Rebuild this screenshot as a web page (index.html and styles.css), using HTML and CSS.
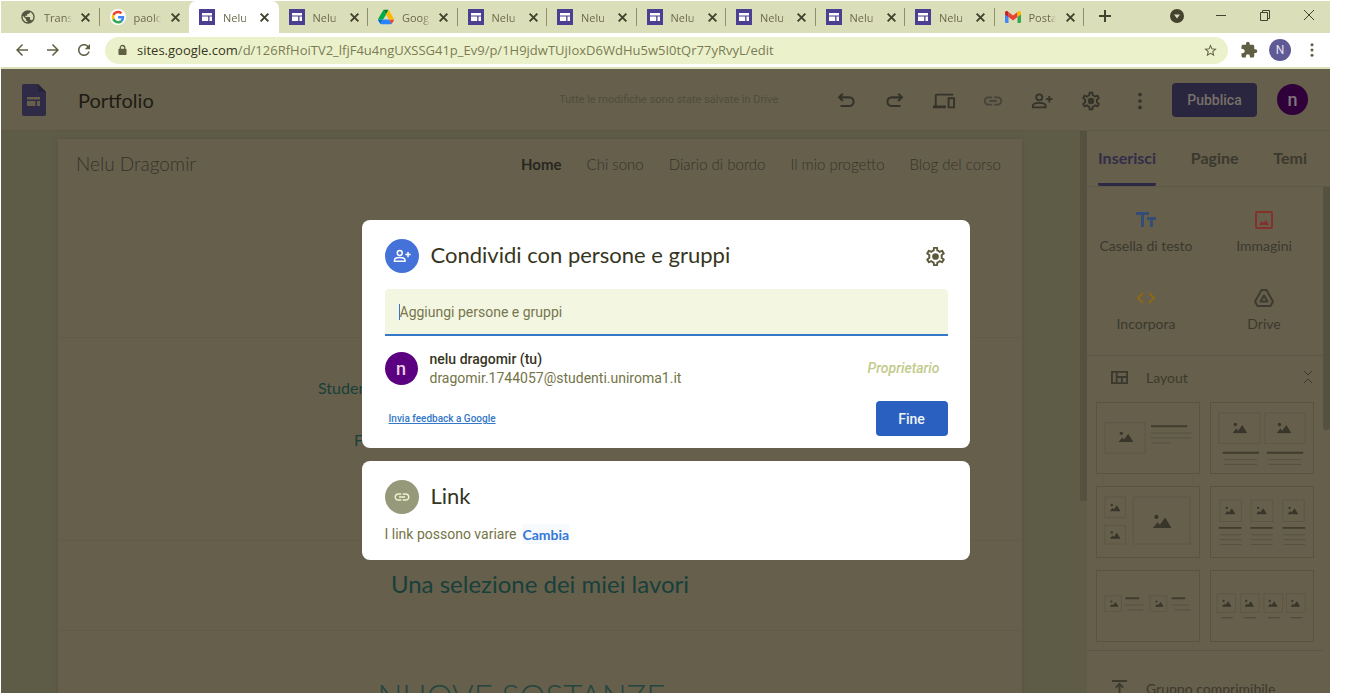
FILE: index.html
```html
<!DOCTYPE html>
<html lang="it">
  <head>
    <meta charset="UTF-8" />
    <meta name="viewport" content="width=device-width, initial-scale=1.0" />
    <title>Portfolio - Google Sites</title>
    <link rel="stylesheet" href="styles.css">
  </head>
  <body>
    <svg class="sprite" aria-hidden="true">
      <symbol id="sites" viewBox="0 0 16 16"><rect width="16" height="16" fill="#4a3f91"/><path d="M3 4h10v2.500H3zM3 7.500h6.200V12H3zM10.500 7.500H13V12h-2.500z" fill="#fff"/></symbol>
      <symbol id="globe" viewBox="0 0 24 24"><circle cx="12" cy="12" r="9" fill="#dbdfb9"/><path fill="#55563f" d="M12 2C6.480 2 2 6.480 2 12s4.480 10 10 10 10-4.480 10-10S17.520 2 12 2zm-1 17.930c-3.950-.490-7-3.850-7-7.930 0-.620.080-1.210.210-1.790L9 15v1c0 1.100.900 2 2 2v1.930zm6.900-2.540c-.260-.810-1-1.390-1.900-1.390h-1v-3c0-.550-.450-1-1-1H8v-2h2c.550 0 1-.450 1-1V7h2c1.100 0 2-.900 2-2v-.410c2.930 1.190 5 4.060 5 7.410 0 2.080-.800 3.970-2.100 5.390z"/></symbol>
      <symbol id="google" viewBox="0 0 48 48"><circle cx="24" cy="24" r="24" fill="#fff"/><g transform="translate(5 5) scale(.8)"><path fill="#ea4335" d="M24 9.500c3.540 0 6.710 1.220 9.210 3.600l6.850-6.850C35.900 2.380 30.470 0 24 0 14.620 0 6.510 5.380 2.560 13.220l7.980 6.190C12.430 13.720 17.740 9.500 24 9.500z"/><path fill="#4285f4" d="M46.980 24.550c0-1.570-.150-3.090-.380-4.550H24v9.020h12.940c-.580 2.960-2.260 5.480-4.780 7.180l7.730 6c4.510-4.180 7.090-10.360 7.090-17.650z"/><path fill="#fbbc05" d="M10.530 28.590c-.480-1.450-.760-2.990-.760-4.590s.270-3.140.760-4.590l-7.980-6.190C.920 16.460 0 20.120 0 24c0 3.880.920 7.540 2.560 10.780l7.970-6.190z"/><path fill="#34a853" d="M24 48c6.480 0 11.930-2.130 15.890-5.810l-7.730-6c-2.150 1.450-4.920 2.300-8.160 2.300-6.260 0-11.570-4.220-13.470-9.910l-7.980 6.190C6.510 42.620 14.620 48 24 48z"/></g></symbol>
      <symbol id="gdrive" viewBox="0 0 87 78"><path fill="#0066da" d="M6.600 66.850l3.850 6.650c.800 1.400 1.950 2.500 3.300 3.300L27.500 53H0c0 1.550.400 3.100 1.200 4.500z"/><path fill="#00ac47" d="M43.650 25L29.900 1.200c-1.350.800-2.500 1.900-3.300 3.300L1.200 48.500C.400 49.900 0 51.450 0 53h27.500z"/><path fill="#ea4335" d="M73.550 76.800c1.350-.800 2.500-1.900 3.300-3.300l9.250-16c.800-1.400 1.200-2.950 1.200-4.500H59.800l5.850 11.500z"/><path fill="#00832d" d="M43.650 25L57.400 1.200C56.050.4 54.500 0 52.900 0H34.400c-1.600 0-3.150.450-4.500 1.200z"/><path fill="#2684fc" d="M59.800 53H27.500L13.750 76.800c1.350.800 2.900 1.200 4.500 1.200h50.800c1.600 0 3.150-.450 4.500-1.200z"/><path fill="#ffba00" d="M73.400 26.500L60.700 4.500c-.800-1.400-1.950-2.500-3.300-3.300L43.650 25 59.800 53h27.450c0-1.550-.400-3.100-1.200-4.500z"/></symbol>
      <symbol id="gmail" viewBox="0 0 16 12"><path fill="#4285f4" d="M0 2l3.500 2.500V12H1a1 1 0 0 1-1-1z"/><path fill="#34a853" d="M16 2l-3.500 2.500V12H15a1 1 0 0 0 1-1z"/><path fill="#ea4335" d="M3.500 1L8 4.500 12.500 1v5L8 9.500 3.500 6z"/><path fill="#c5221f" d="M0 1.800C0 .2 1.600-.4 2.800.5l.7.5v5L0 3.500z"/><path fill="#fbbc04" d="M16 1.800C16 .2 14.400-.4 13.200.5l-.7.500v5L16 3.500z"/></symbol>
      <symbol id="close" viewBox="0 0 10 10"><path d="M1.500 1.500l7 7M8.500 1.500l-7 7" stroke="currentColor" stroke-width="1.800" fill="none"/></symbol>
      <symbol id="back" viewBox="0 0 24 24"><path fill="currentColor" d="M20 11H7.830l5.590-5.590L12 4l-8 8 8 8 1.410-1.410L7.830 13H20v-2z"/></symbol>
      <symbol id="reload" viewBox="0 0 24 24"><path fill="currentColor" d="M17.650 6.350C16.200 4.900 14.210 4 12 4c-4.420 0-7.990 3.580-7.990 8s3.570 8 7.990 8c3.730 0 6.840-2.550 7.730-6h-2.080c-.820 2.330-3.040 4-5.650 4-3.310 0-6-2.690-6-6s2.690-6 6-6c1.660 0 3.140.690 4.220 1.780L13 11h7V4l-2.350 2.350z"/></symbol>
      <symbol id="dots" viewBox="0 0 24 24"><g fill="currentColor"><circle cx="12" cy="5" r="2"/><circle cx="12" cy="12" r="2"/><circle cx="12" cy="19" r="2"/></g></symbol>
      <symbol id="undo" viewBox="0 0 24 24"><path d="M8.500 4L4.500 8l4 4M4.500 8h11a4.500 4.500 0 0 1 0 9.500H6" fill="none" stroke="currentColor" stroke-width="2.300"/></symbol>
      <symbol id="devices" viewBox="0 0 24 24"><path fill="currentColor" d="M4 6h18V4H4c-1.100 0-2 .900-2 2v11H0v3h14v-3H4V6zm19 2h-6c-.550 0-1 .450-1 1v10c0 .550.450 1 1 1h6c.550 0 1-.450 1-1V9c0-.550-.450-1-1-1zm-1 10h-4v-8h4v8z"/></symbol>
      <symbol id="link" viewBox="0 0 24 24"><path fill="currentColor" d="M3.900 12c0-1.710 1.390-3.100 3.100-3.100h4V7H7c-2.760 0-5 2.240-5 5s2.240 5 5 5h4v-1.900H7c-1.710 0-3.100-1.390-3.100-3.100zM8 13h8v-2H8v2zm9-6h-4v1.900h4c1.710 0 3.100 1.390 3.100 3.100s-1.390 3.100-3.100 3.100h-4V17h4c2.760 0 5-2.240 5-5s-2.240-5-5-5z"/></symbol>
      <symbol id="person" viewBox="0 0 24 24"><g fill="none" stroke="currentColor" stroke-width="2"><circle cx="9" cy="8" r="3.300"/><path d="M2 19v-1.500C2 15 6 14 9 14s7 1 7 3.500V19zM20 6.500v7M16.500 10h7"/></g></symbol>
      <symbol id="gear" viewBox="0 0 24 24"><path fill="currentColor" d="M19.430 12.980c.040-.320.070-.640.070-.980 0-.340-.030-.660-.070-.980l2.110-1.650c.190-.150.240-.420.120-.640l-2-3.460c-.090-.160-.260-.250-.440-.250-.060 0-.120.010-.170.030l-2.490 1c-.520-.400-1.080-.730-1.690-.980l-.380-2.650C14.460 2.180 14.250 2 14 2h-4c-.250 0-.460.180-.490.420l-.380 2.650c-.610.250-1.170.590-1.690.980l-2.490-1c-.060-.020-.120-.030-.180-.030-.170 0-.340.090-.430.250l-2 3.460c-.130.220-.070.490.120.640l2.110 1.650c-.040.320-.070.650-.070.980 0 .330.030.660.070.980l-2.110 1.650c-.190.150-.240.420-.120.640l2 3.460c.090.160.260.250.440.250.060 0 .120-.010.170-.030l2.490-1c.520.400 1.080.730 1.690.980l.380 2.650c.030.240.240.420.490.420h4c.250 0 .460-.180.490-.420l.380-2.650c.610-.250 1.170-.590 1.690-.980l2.490 1c.060.020.120.030.180.030.170 0 .340-.090.430-.250l2-3.460c.120-.220.070-.490-.120-.640l-2.110-1.650zm-1.980-1.710c.040.310.050.520.050.730 0 .210-.020.430-.050.730l-.140 1.130.890.700 1.080.840-.700 1.210-1.270-.510-1.040-.420-.900.680c-.430.320-.840.560-1.250.730l-1.060.430-.160 1.130-.200 1.350h-1.400l-.190-1.350-.160-1.130-1.060-.430c-.430-.180-.830-.410-1.230-.710l-.910-.700-1.060.430-1.270.510-.700-1.210 1.080-.840.890-.700-.140-1.130c-.030-.310-.050-.540-.050-.740s.020-.430.050-.730l.140-1.130-.890-.700-1.080-.840.700-1.210 1.270.510 1.040.420.900-.680c.430-.320.840-.560 1.250-.730l1.060-.430.160-1.130.200-1.350h1.390l.190 1.350.160 1.130 1.060.430c.430.180.830.410 1.230.710l.910.700 1.060-.430 1.270-.510.700 1.210-1.070.850-.890.700.140 1.130z"/><circle cx="12" cy="12" r="3.500" fill="currentColor"/></symbol>
      <symbol id="peaks" viewBox="0 0 16 12"><path fill="#38352a" d="M0 12l4-5 2 2.300L10.500 3 16 12z"/><circle cx="3" cy="2.500" r="1.800" fill="#38352a"/></symbol>
    </svg>

    <div class="browser">
      <div class="tabstrip">
        <div class="tabs">
          <div class="tab"><svg><use href="#globe"/></svg><span>Translate</span><button aria-label="Chiudi"><svg><use href="#close"/></svg></button></div>
          <div class="tab no-line"><svg><use href="#google"/></svg><span>paolo rossi</span><button aria-label="Chiudi"><svg><use href="#close"/></svg></button></div>
          <div class="tab active"><svg><use href="#sites"/></svg><span>Nelu Dragomir</span><button aria-label="Chiudi"><svg><use href="#close"/></svg></button></div>
          <div class="tab"><svg><use href="#sites"/></svg><span>Nelu Dragomir</span><button aria-label="Chiudi"><svg><use href="#close"/></svg></button></div>
          <div class="tab"><svg><use href="#gdrive"/></svg><span>Google Drive</span><button aria-label="Chiudi"><svg><use href="#close"/></svg></button></div>
          <div class="tab"><svg><use href="#sites"/></svg><span>Nelu Dragomir</span><button aria-label="Chiudi"><svg><use href="#close"/></svg></button></div>
          <div class="tab"><svg><use href="#sites"/></svg><span>Nelu Dragomir</span><button aria-label="Chiudi"><svg><use href="#close"/></svg></button></div>
          <div class="tab"><svg><use href="#sites"/></svg><span>Nelu Dragomir</span><button aria-label="Chiudi"><svg><use href="#close"/></svg></button></div>
          <div class="tab"><svg><use href="#sites"/></svg><span>Nelu Dragomir</span><button aria-label="Chiudi"><svg><use href="#close"/></svg></button></div>
          <div class="tab"><svg><use href="#sites"/></svg><span>Nelu Dragomir</span><button aria-label="Chiudi"><svg><use href="#close"/></svg></button></div>
          <div class="tab"><svg><use href="#sites"/></svg><span>Nelu Dragomir</span><button aria-label="Chiudi"><svg><use href="#close"/></svg></button></div>
          <div class="tab"><svg><use href="#gmail"/></svg><span>Posta in arrivo</span><button aria-label="Chiudi"><svg><use href="#close"/></svg></button></div>
        </div>
        <div class="window-buttons">
          <button class="new-tab" aria-label="Nuova scheda"><svg viewBox="0 0 14 14"><path d="M7 1v12M1 7h12" stroke="currentColor" stroke-width="2"/></svg></button>
          <button aria-label="Cerca schede"><svg viewBox="0 0 14 14"><circle cx="7" cy="7" r="7" fill="currentColor"/><path d="M4 5.500h6L7 9.500z" fill="#dbdfb9"/></svg></button>
          <button aria-label="Riduci"><svg viewBox="0 0 14 14"><path d="M2 6.500h10" stroke="currentColor"/></svg></button>
          <button aria-label="Ripristina"><svg viewBox="0 0 14 14"><path d="M2.500 3.500h7v8h-7zM4.500 3.500v-2h7v8h-2" fill="none" stroke="currentColor"/></svg></button>
          <button aria-label="Chiudi finestra"><svg viewBox="0 0 14 14"><path d="M2 1l10 10M12 1L2 11" stroke="currentColor"/></svg></button>
        </div>
      </div>

      <div class="toolbar">
        <button class="nav" aria-label="Indietro"><svg><use href="#back"/></svg></button>
        <button class="nav forward" aria-label="Avanti"><svg><use href="#back"/></svg></button>
        <button class="nav" aria-label="Ricarica"><svg><use href="#reload"/></svg></button>
        <div class="address">
          <svg class="lock" viewBox="0 0 10 12"><path d="M2.500 5V3.500a2.500 2.500 0 0 1 5 0V5" fill="none" stroke="currentColor" stroke-width="1.400"/><rect x=".5" y="4.500" width="9" height="7" rx="1" fill="currentColor"/></svg>
          <p><b>sites.google.com</b>/d/126RfHoiTV2_lfjF4u4ngUXSSG41p_Ev9/p/1H9jdwTUjIoxD6WdHu5w5I0tQr77yRvyL/edit</p>
          <button aria-label="Preferiti"><svg viewBox="0 0 24 24"><path fill="currentColor" d="M22 9.240l-7.190-.620L12 2 9.190 8.630 2 9.240l5.460 4.730L5.820 21 12 17.270 18.180 21l-1.630-7.030L22 9.240zM12 15.400l-3.760 2.270 1-4.280-3.320-2.880 4.380-.380L12 6.100l1.710 4.040 4.380.380-3.320 2.880 1 4.280L12 15.400z"/></svg></button>
        </div>
        <button aria-label="Estensioni"><svg viewBox="0 0 24 24"><path fill="currentColor" d="M20.500 11H19V7c0-1.100-.900-2-2-2h-4V3.500C13 2.120 11.880 1 10.500 1S8 2.120 8 3.500V5H4c-1.100 0-1.990.900-1.990 2v3.800H3.500c1.490 0 2.700 1.210 2.700 2.700s-1.210 2.700-2.700 2.700H2V20c0 1.100.900 2 2 2h3.800v-1.500c0-1.490 1.210-2.700 2.700-2.700 1.490 0 2.700 1.210 2.700 2.700V22H17c1.100 0 2-.900 2-2v-4h1.500c1.380 0 2.500-1.120 2.500-2.500S21.880 11 20.500 11z"/></svg></button>
        <button class="profile">N</button>
        <button aria-label="Menu"><svg><use href="#dots"/></svg></button>
      </div>

      <div class="app">
        <header class="app-header">
          <svg class="logo" viewBox="0 0 24 32"><path fill="#2f2b46" d="M2 0h14l8 8v22a2 2 0 0 1-2 2H2a2 2 0 0 1-2-2V2a2 2 0 0 1 2-2z"/><path fill="#26223a" d="M16 0l8 8h-8z"/><path fill="#665f4c" d="M5 13h13v2.500H5zM5 17h8.500v5H5zM15 17h3v5h-3z"/></svg>
          <h1>Portfolio</h1>
          <small>Tutte le modifiche sono state salvate in Drive</small>
          <div class="actions">
            <button aria-label="Annulla"><svg><use href="#undo"/></svg></button>
            <button class="redo" aria-label="Ripeti"><svg><use href="#undo"/></svg></button>
            <button aria-label="Anteprima"><svg><use href="#devices"/></svg></button>
            <button class="dim" aria-label="Copia link"><svg><use href="#link"/></svg></button>
            <button aria-label="Condividi"><svg><use href="#person"/></svg></button>
            <button aria-label="Impostazioni"><svg><use href="#gear"/></svg></button>
            <button aria-label="Altro"><svg><use href="#dots"/></svg></button>
          </div>
          <button class="publish">Pubblica</button>
          <button class="avatar dark">n</button>
        </header>

        <div class="editor">
          <main class="canvas">
            <div class="site">
              <section class="site-top">
                <h2>Nelu Dragomir</h2>
                <nav>
                  <a class="current" href="#">Home</a>
                  <a href="#">Chi sono</a>
                  <a href="#">Diario di bordo</a>
                  <a href="#">Il mio progetto</a>
                  <a href="#">Blog del corso</a>
                </nav>
              </section>
              <section class="bio">
                <p>Studente</p>
                <p class="second">F</p>
              </section>
              <section class="works"><h3>Una selezione dei miei lavori</h3></section>
              <section class="project"><h3>NUOVE SOSTANZE</h3></section>
            </div>
          </main>
          <div class="canvas-scroll"></div>

          <aside class="sidebar">
            <div class="side-tabs">
              <button class="selected">Inserisci</button>
              <button>Pagine</button>
              <button>Temi</button>
            </div>
            <div class="side-body">
              <div class="side-content">
                <div class="inserts">
                  <button><svg viewBox="0 0 20 20"><path fill="#344d74" d="M0 2h13v3H8v12H5V5H0zM11 7h9v3h-3v7h-3v-7h-3z"/></svg>Casella di testo</button>
                  <button><svg viewBox="0 0 20 20"><rect x="2" y="2" width="16" height="16" rx="1" fill="none" stroke="#84302d" stroke-width="2"/><path fill="#84302d" d="M5 15l2.500-4 2 2 2.500-3 3 5z"/></svg>Immagini</button>
                  <button><svg viewBox="0 0 20 20"><path d="M7 5l-5 5 5 5M13 5l5 5-5 5" fill="none" stroke="#8c6a15" stroke-width="2"/></svg>Incorpora</button>
                  <button><svg viewBox="0 0 20 20"><g fill="none" stroke="#3e3c30" stroke-width="2" stroke-linejoin="round"><path d="M7.500 2h5L19 13.500 16.500 18h-13L1 13.500z"/><path d="M10 7.500l3.500 6h-7z"/></g></svg>Drive</button>
                </div>
                <div class="group">
                  <svg viewBox="0 0 18 14"><path d="M1 1h16v12H1zM6 1v12M6 6.500h11M11.500 6.500V13" fill="none" stroke="currentColor" stroke-width="2"/></svg>
                  <span>Layout</span>
                  <svg class="fold" viewBox="0 0 10 14"><path d="M1 1l4 4 4-4M1 13l4-4 4 4" fill="none" stroke="currentColor"/></svg>
                </div>
                <div class="layouts">
                  <svg viewBox="0 0 104 71"><rect class="box" x="8" y="20" width="41" height="31"/><use href="#peaks" x="22" y="28" width="15" height="12"/><path class="head" d="M55 23.500h37"/><path class="line" d="M55 30.500h41M55 35.500h41M55 40.500h20"/></svg>
                  <svg viewBox="0 0 104 71"><rect class="box" x="8" y="10" width="42" height="31"/><rect class="box" x="55" y="10" width="41" height="31"/><use href="#peaks" x="22" y="19" width="15" height="12"/><use href="#peaks" x="67" y="19" width="15" height="12"/><path class="head" d="M12 50.500h37M57 50.500h37"/><path class="line" d="M14 57.500h33M14 62.500h33M59 57.500h33M59 62.500h33"/></svg>
                  <svg viewBox="0 0 104 71"><rect class="box" x="8" y="10" width="21" height="21"/><rect class="box" x="8" y="39" width="21" height="19"/><rect class="box" x="37" y="10" width="58" height="48"/><use href="#peaks" x="13" y="16" width="11" height="9"/><use href="#peaks" x="13" y="44" width="11" height="9"/><use href="#peaks" x="57" y="27" width="19" height="15"/></svg>
                  <svg viewBox="0 0 104 71"><rect class="box" x="9" y="13" width="22" height="22"/><rect class="box" x="41" y="13" width="22" height="22"/><rect class="box" x="73" y="13" width="22" height="22"/><use href="#peaks" x="14" y="19" width="11" height="9"/><use href="#peaks" x="46" y="19" width="11" height="9"/><use href="#peaks" x="78" y="19" width="11" height="9"/><path class="head" d="M8 41.500h23M40 41.500h23M73 41.500h23"/><path class="line" d="M9 48.500h22M9 53.500h22M9 58.500h22M41 48.500h22M41 53.500h22M41 58.500h22M74 48.500h22M74 53.500h22M74 58.500h22"/></svg>
                  <svg viewBox="0 0 104 71"><rect class="box" x="8" y="25" width="17" height="16"/><rect class="box" x="54" y="25" width="17" height="16"/><use href="#peaks" x="13" y="29" width="9" height="8"/><use href="#peaks" x="59" y="29" width="9" height="8"/><path class="head" d="M29 27.500h14M76 27.500h14"/><path class="line" d="M29 34.500h18M31 39.500h16M76 34.500h18M79 39.500h16"/></svg>
                  <svg viewBox="0 0 104 71"><rect class="box" x="6" y="23" width="19" height="19"/><rect class="box" x="30" y="23" width="19" height="19"/><rect class="box" x="54" y="23" width="19" height="19"/><rect class="box" x="77" y="23" width="19" height="19"/><use href="#peaks" x="11" y="28" width="10" height="9"/><use href="#peaks" x="34" y="28" width="10" height="9"/><use href="#peaks" x="58" y="28" width="10" height="9"/><use href="#peaks" x="81" y="28" width="10" height="9"/><path class="line strong" d="M10 47.500h12M34 47.500h12M58 47.500h12M81 47.500h12"/></svg>
                </div>
                <div class="group last">
                  <svg viewBox="0 0 18 18"><path d="M1 1h16M9 4v13M5 8l4-4 4 4" fill="none" stroke="currentColor" stroke-width="2"/></svg>
                  <span>Gruppo comprimibile</span>
                </div>
              </div>
              <div class="side-scroll"></div>
            </div>
          </aside>
        </div>

        <div class="overlay">
          <form class="dialog share">
            <div class="dialog-title">
              <span class="round blue"><svg><use href="#person"/></svg></span>
              <h2>Condividi con persone e gruppi</h2>
              <button type="button" aria-label="Impostazioni"><svg><use href="#gear"/></svg></button>
            </div>
            <div class="field"><input type="text" aria-label="Aggiungi persone e gruppi" placeholder="Aggiungi persone e gruppi"></div>
            <div class="member">
              <span class="avatar">n</span>
              <div>
                <b>nelu dragomir (tu)</b>
                <p>dragomir.1744057@studenti.uniroma1.it</p>
              </div>
              <em>Proprietario</em>
            </div>
            <div class="dialog-foot">
              <a href="#">Invia feedback a Google</a>
              <button type="button" class="done">Fine</button>
            </div>
          </form>
          <div class="dialog links">
            <div class="dialog-title">
              <span class="round"><svg><use href="#link"/></svg></span>
              <h2>Link</h2>
            </div>
            <p>I link possono variare <button type="button">Cambia</button></p>
          </div>
        </div>
      </div>
    </div>
  </body>
</html>
```

FILE: styles.css
```css
* { box-sizing: border-box; }
html, body { height: 100%; margin: 0; overflow: hidden; background-color: #fff; }
body { padding: 1px 15px 0 1px; font-family: Roboto, "Liberation Sans", sans-serif; font-size: 14px; }
h1, h2, h3, p { margin: 0; font-weight: 400; }
button { display: flex; align-items: center; justify-content: center; padding: 0; border: 0; background: none; color: inherit; font: inherit; }
svg { flex: none; }
.sprite { position: absolute; width: 0; height: 0; }
.browser { display: flex; flex-direction: column; height: 100%; }

/* tabs */
.tabstrip { display: flex; flex: none; height: 32px; background-color: #dbdfb9; color: #44432f; }
.tabs { display: flex; flex: 1; min-width: 0; padding-left: 9px; }
.tab { display: flex; flex: 1; align-items: center; gap: 8px; min-width: 0; padding: 0 8px 0 10px; background: linear-gradient(#8d8f6f, #8d8f6f) no-repeat right center / 1px 18px; font-family: "Open Sans", "Noto Sans", sans-serif; font-size: 11px; }
.tab > svg { width: 16px; height: 16px; }
.tab span { flex: 1; overflow: hidden; color: #6b694c; white-space: nowrap; -webkit-mask-image: linear-gradient(to right, #000 75%, transparent); mask-image: linear-gradient(to right, #000 75%, transparent); }
.tab button { width: 12px; height: 16px; }
.tab button svg { width: 11px; height: 11px; }
.tab.no-line { background: none; }
.tab.active { border-radius: 7px 7px 0 0; background: #fff; }
.window-buttons { display: flex; flex: none; align-items: center; gap: 30px; width: 246px; padding: 0 14px 2px; }
.window-buttons svg { width: 14px; height: 14px; }
.new-tab { margin-right: auto; }

/* address bar */
.toolbar { display: flex; flex: none; align-items: center; gap: 12px; height: 36px; padding: 0 10px 0 11px; border-bottom: 2px solid #dbe0bb; color: #605f43; }
.toolbar button { width: 17px; height: 24px; }
.toolbar .nav { width: 19px; }
.toolbar svg { width: 18px; height: 18px; }
.forward svg, .redo svg { transform: scaleX(-1); }
.address { display: flex; flex: 1; align-items: center; gap: 10px; height: 27px; min-width: 0; padding: 0 9px 0 13px; border-radius: 14px; background-color: #ebf2cb; font-family: "Open Sans", "Noto Sans", sans-serif; font-size: 13px; }
.address p { flex: 1; overflow: hidden; color: #7b7a55; white-space: nowrap; }
.address b { color: #36351f; font-weight: 400; }
.address .lock { width: 9px; height: 12px; }
.address button svg { width: 15px; height: 15px; }
.toolbar .profile { width: 22px; height: 22px; border-radius: 50%; background-color: #5f5996; color: #e4e1e8; font-size: 12px; }

/* app header */
.app { position: relative; display: flex; flex: 1; flex-direction: column; min-height: 0; background-color: #665f4c; color: #34332a; }
.app-header { display: flex; flex: none; align-items: center; height: 62px; padding: 0 22px 0 21px; border-bottom: 1px solid #5b5844; }
.logo { width: 24px; height: 32px; margin-right: 32px; }
.app-header h1 { flex: 1; color: #1d1c14; font-family: Lato, sans-serif; font-size: 20px; line-height: 24px; }
.app-header small { margin-right: 56px; color: #504c3b; font-size: 11px; }
.actions { display: flex; gap: 25px; padding-top: 2px; }
.actions button { width: 24px; height: 24px; }
.actions svg { width: 22px; height: 22px; }
.actions .dim { color: #46433a; }
.publish { width: 85px; height: 34px; margin: 0 20px; border-radius: 4px; background-color: #2a2640; color: #777168; font-size: 14px; font-weight: 500; }
.avatar { display: flex; flex: none; align-items: center; justify-content: center; width: 33px; height: 33px; border-radius: 50%; background-color: #5b0080; color: #e9cfe3; font-size: 18px; font-weight: 500; line-height: 20px; }
.avatar.dark { width: 31px; height: 31px; background-color: #30003b; color: #81767b; }

/* site canvas */
.editor { display: flex; flex: 1; min-height: 0; overflow: hidden; background-color: #5e5b47; }
.canvas { flex: 1; min-width: 0; padding: 8px 58px 0 57px; }
.site { background-color: #665f4c; box-shadow: 0 0 3px #534f3d; font-family: Lato, sans-serif; }
.site section { border-bottom: 1px solid #625b48; }
.site-top { display: flex; align-items: flex-start; justify-content: space-between; height: 199px; padding: 12px 21px 0 18px; }
.site-top h2 { font-size: 19px; font-weight: 300; line-height: 26px; }
.site nav { display: flex; gap: 25px; font-size: 15px; font-weight: 300; line-height: 26px; }
.site nav a { color: #34332a; text-decoration: none; }
.site nav .current { color: #27271f; font-weight: 700; }
.bio { height: 203px; padding: 38px 0 0 260px; color: #183f3a; font-size: 16px; line-height: 24px; }
.bio .second { padding: 28px 0 0 36px; }
.works { display: flex; align-items: center; justify-content: center; height: 90px; padding-bottom: 5px; color: #183f3a; }
.works h3 { font-size: 24px; }
.project { height: 130px; padding: 45px 37px 0 0; color: #234640; text-align: center; }
.project h3 { font-size: 33px; font-weight: 300; line-height: 40px; }
.canvas-scroll { flex: none; width: 7px; height: 370px; background-color: #545140; }

/* sidebar */
.sidebar { display: flex; flex: none; flex-direction: column; width: 243px; background-color: #665f4c; color: #3b392e; }
.side-tabs { display: flex; flex: none; justify-content: space-between; height: 56px; padding: 0 23px 0 11px; border-bottom: 1px solid #5d5945; }
.side-tabs button { border-bottom: 3px solid transparent; font-family: Lato, sans-serif; font-size: 16px; font-weight: 700; }
.side-tabs .selected { border-color: #2d2846; border-radius: 2px; color: #322e49; }
.side-body { display: flex; flex: 1; min-height: 0; }
.side-content { flex: 1; min-width: 0; }
.side-scroll { flex: none; width: 7px; height: 243px; border-radius: 0 0 4px 4px; background-color: #545140; }
.inserts { display: grid; grid-template-columns: 1fr 1fr; grid-auto-rows: 78px; height: 169px; padding-top: 23px; border-bottom: 1px solid #5a5643; }
.inserts button { flex-direction: column; gap: 7px; justify-content: flex-start; font-family: Lato, sans-serif; font-size: 14px; line-height: 18px; }
.inserts svg { width: 20px; height: 20px; }
.group { display: flex; align-items: center; gap: 18px; height: 42px; padding: 0 10px 0 24px; font-family: Lato, sans-serif; font-size: 14px; }
.group svg { width: 17px; height: 17px; }
.group span { flex: 1; }
.group .fold { width: 10px; height: 14px; }
.group.last { height: 76px; border-top: 1px solid #5a5643; }
.layouts { display: grid; grid-template-columns: 1fr 1fr; gap: 12px 10px; padding: 4px 9px 8px 9px; }
.layouts svg { width: 100%; height: 72px; border: 1px solid #58543f; }
.box { fill: none; stroke: #5e5744; }
.head { stroke: #423c2f; stroke-width: 2; }
.line { stroke: #575140; }
.line.strong { stroke: #4a4435; }

/* share dialog */
.overlay { position: absolute; inset: 0; display: flex; flex-direction: column; align-items: center; gap: 13px; padding-top: 151px; }
.dialog { width: 608px; max-width: 90%; padding: 19px 22px 0 23px; border-radius: 8px; background-color: #fff; color: #747447; }
.dialog-title { display: flex; align-items: center; gap: 12px; height: 34px; }
.dialog-title h2 { flex: 1; padding-bottom: 2px; color: #36351e; font-family: Lato, sans-serif; font-size: 22px; line-height: 26px; }
.dialog-title button { width: 24px; height: 24px; color: #5c5a3c; }
.dialog-title button svg { width: 23px; height: 23px; }
.round { display: flex; align-items: center; justify-content: center; width: 34px; height: 34px; border-radius: 50%; background-color: #96997a; color: #eff4cf; }
.round svg { width: 18px; height: 18px; }
.round.blue { background-color: #4472d8; color: #fff; }
.share { height: 228px; }
.field { display: flex; align-items: center; height: 47px; margin-top: 16px; padding: 0 14px; border-bottom: 2px solid #3478c8; border-radius: 4px 4px 0 0; background-color: #f3f7e1; }
.field input { width: 100%; height: 16px; padding: 0; border: 0; border-left: 1px solid #3478c8; outline: 0; background: none; color: #36351e; font: inherit; }
.field input::placeholder { color: #777650; opacity: 1; }
.member { display: flex; align-items: center; gap: 12px; height: 65px; padding-right: 8px; line-height: 19px; }
.member div { flex: 1; }
.member b { color: #36351e; font-weight: 500; }
.member em { color: #c3ca8c; font-weight: 500; }
.dialog-foot { display: flex; align-items: center; justify-content: space-between; padding-left: 4px; }
.dialog-foot a { color: #3478c8; font-size: 10px; font-weight: 500; }
.done { width: 72px; height: 35px; border-radius: 4px; background-color: #2a60c0; color: #eef4f5; font-weight: 500; }
.links { height: 99px; }
.links > p { display: flex; align-items: center; gap: 6px; height: 40px; }
.links > p button { height: 20px; background-color: #f6fafd; color: #3478d8; font-family: Lato, sans-serif; font-weight: 700; }
```
